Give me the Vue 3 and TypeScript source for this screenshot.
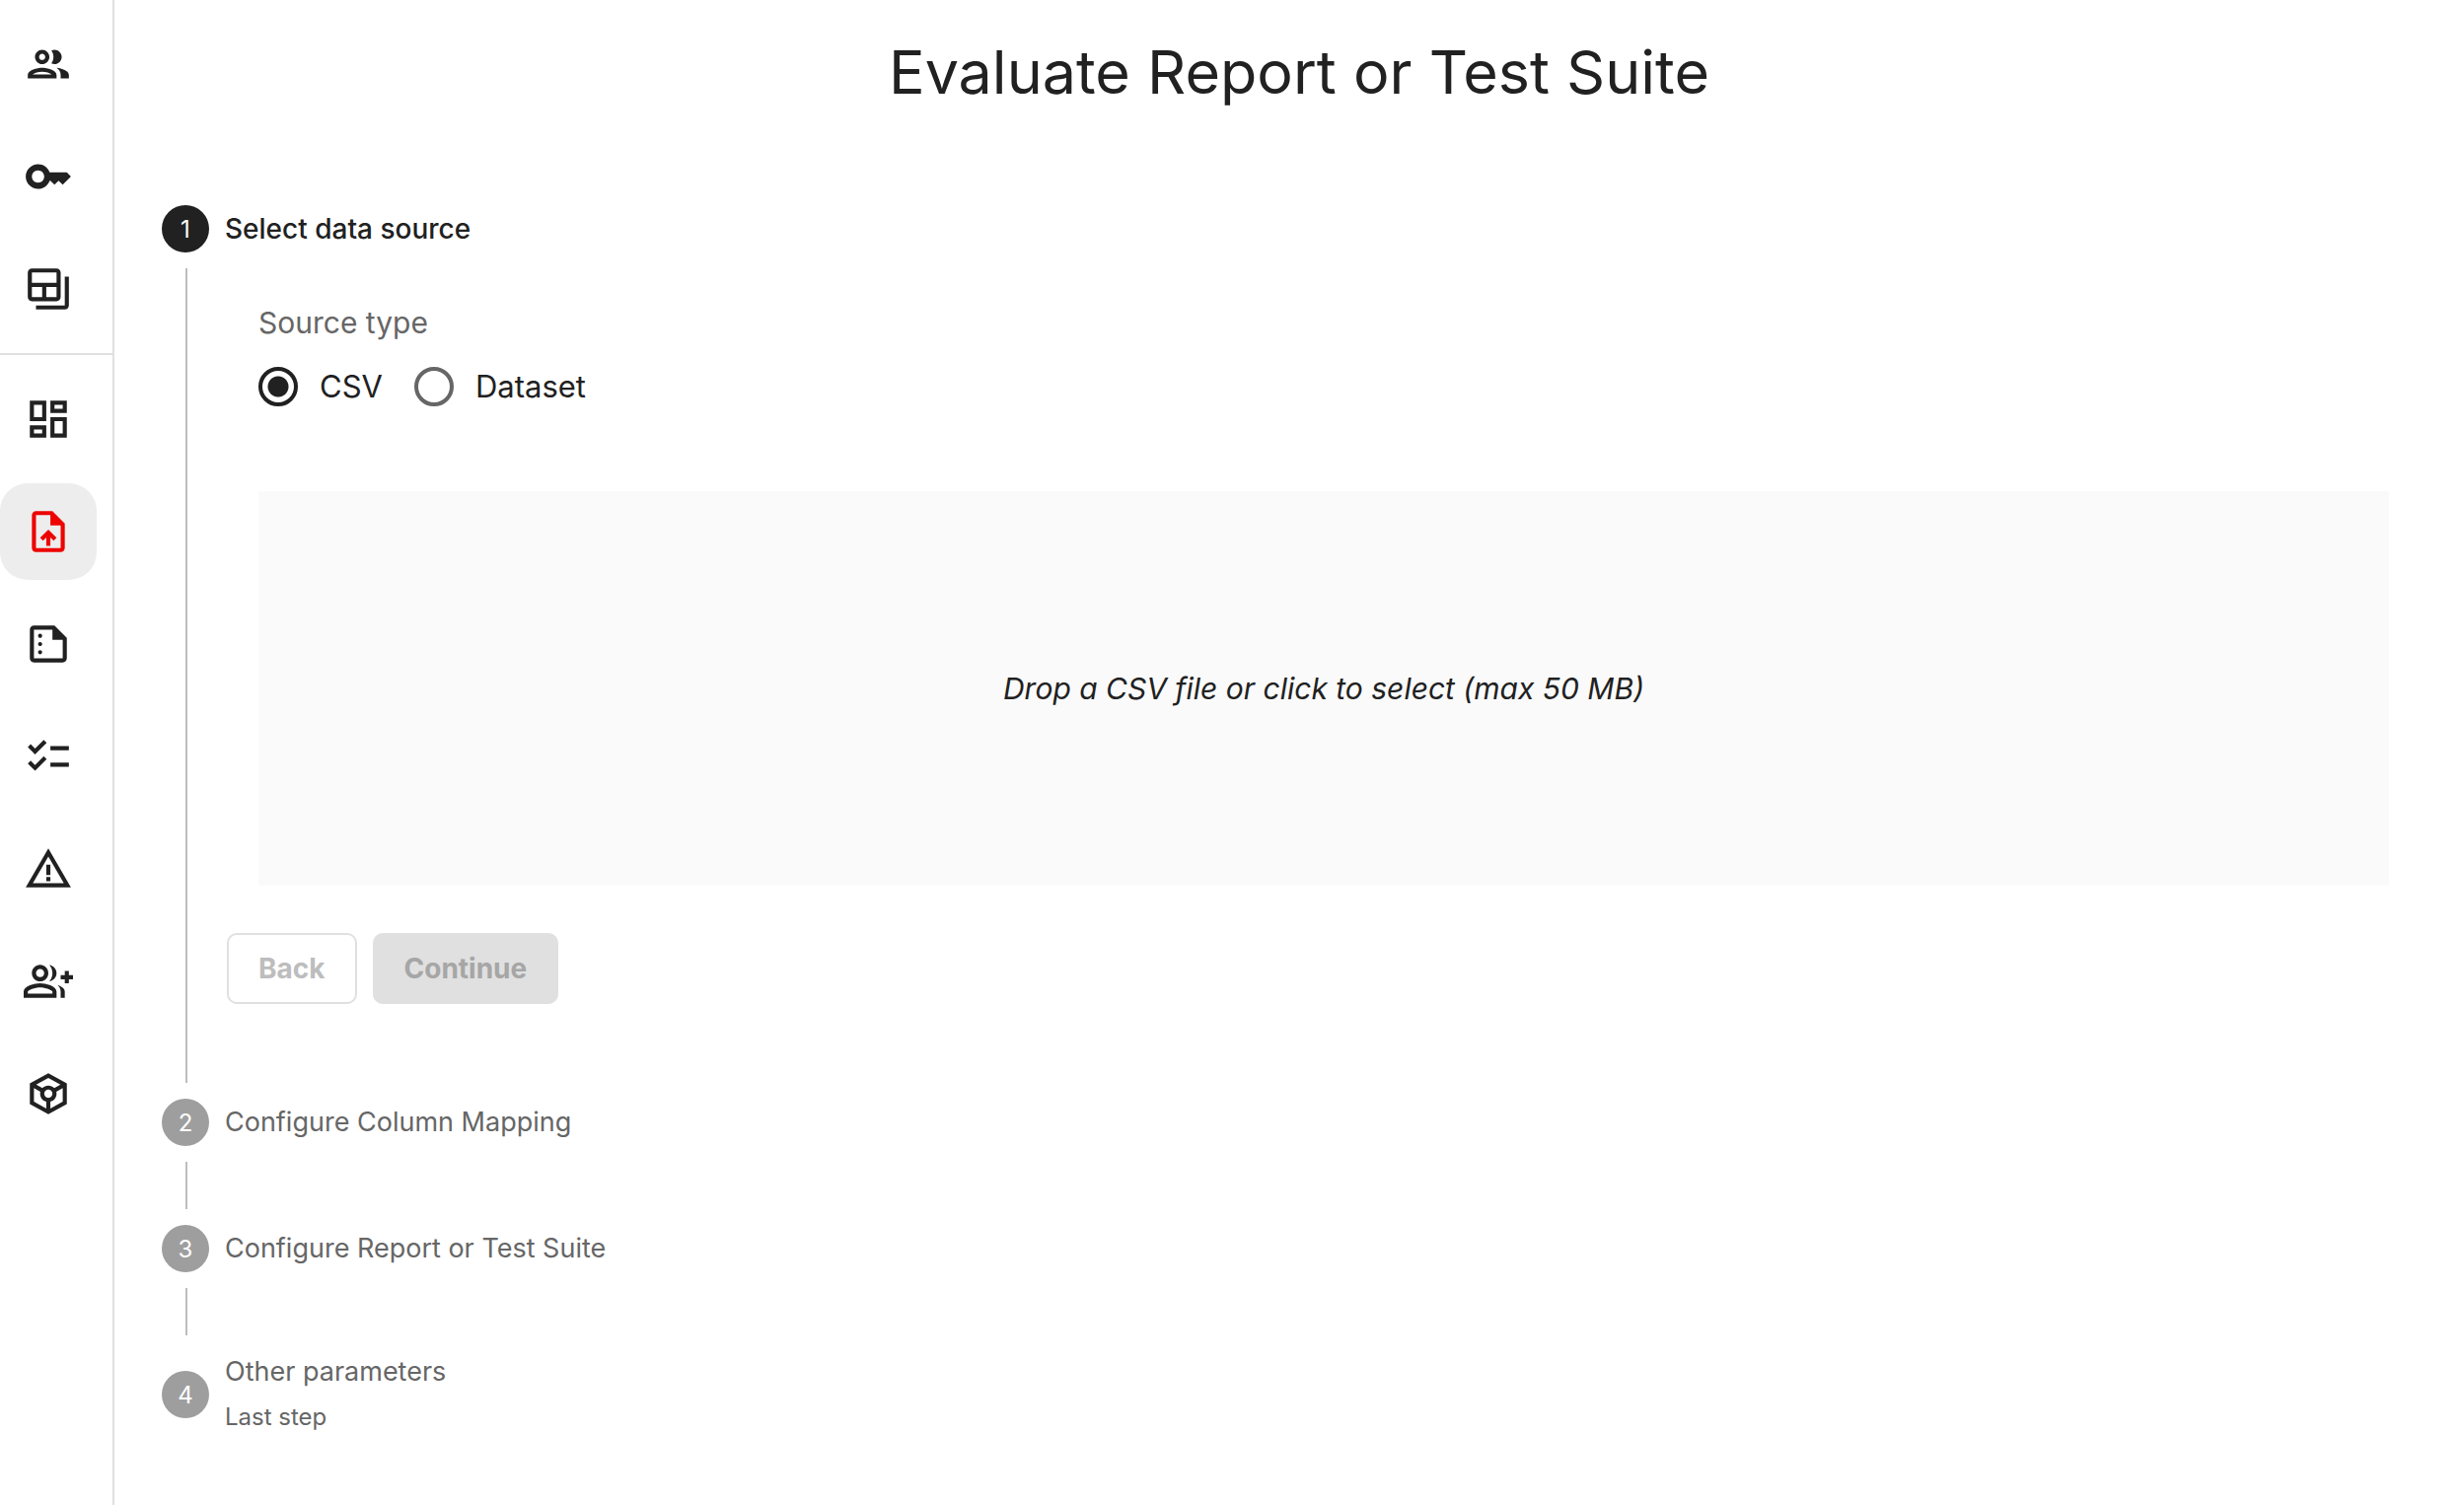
<script setup lang="ts">
import { ref } from 'vue'

interface NavItem {
  label: string
  path: string
  active?: boolean
}

const globalNav: NavItem[] = [
  {
    label: 'Teams',
    path: 'M9 13.75c-2.34 0-7 1.17-7 3.5V19h14v-1.75c0-2.33-4.66-3.5-7-3.5M4.34 17c.84-.58 2.87-1.25 4.66-1.25s3.82.67 4.66 1.25zM9 12c1.93 0 3.5-1.57 3.5-3.5S10.93 5 9 5 5.5 6.57 5.5 8.5 7.07 12 9 12m0-5c.83 0 1.5.67 1.5 1.5S9.83 10 9 10s-1.5-.67-1.5-1.5S8.17 7 9 7m7.04 6.81c1.16.84 1.96 1.96 1.96 3.44V19h4v-1.75c0-2.02-3.5-3.17-5.96-3.44M15 12c1.93 0 3.5-1.57 3.5-3.5S16.93 5 15 5c-.54 0-1.04.13-1.5.35.63.89 1 1.98 1 3.15s-.37 2.26-1 3.15c.46.22.96.35 1.5.35',
  },
  {
    label: 'Tokens',
    path: 'M21 10h-8.35C11.83 7.67 9.61 6 7 6c-3.31 0-6 2.69-6 6s2.69 6 6 6c2.61 0 4.83-1.67 5.65-4H13l2 2 2-2 2 2 4-4.04zM7 15c-1.65 0-3-1.35-3-3s1.35-3 3-3 3 1.35 3 3-1.35 3-3 3',
  },
  {
    label: 'Datasets',
    path: 'M20 6v14H6v2h14c1.1 0 2-.9 2-2V6zM16 2H4c-1.1 0-2 .9-2 2v12c0 1.1.9 2 2 2h12c1.1 0 2-.9 2-2V4c0-1.1-.9-2-2-2M9 16H4v-5h5zm7 0h-5v-5h5zm0-7H4V4h12z',
  },
]

const projectNav: NavItem[] = [
  {
    label: 'Dashboard',
    path: 'M19 5v2h-4V5zM9 5v6H5V5zm10 8v6h-4v-6zM9 17v2H5v-2zM21 3h-8v6h8zM11 3H3v10h8zm10 8h-8v10h8zm-10 4H3v6h8z',
  },
  {
    label: 'Evaluate',
    active: true,
    path: 'M14 2H6c-1.1 0-1.99.9-1.99 2L4 20c0 1.1.89 2 1.99 2H18c1.1 0 2-.9 2-2V8zm4 18H6V4h7v5h5zM8 15.01l1.41 1.41L11 14.84V19h2v-4.16l1.59 1.59L16 15.01 12.01 11z',
  },
  {
    label: 'Reports',
    path: 'M15 3H5c-1.1 0-1.99.9-1.99 2L3 19c0 1.1.89 2 1.99 2H19c1.1 0 2-.9 2-2V9zM5 19V5h9v5h5v9zM9 8c0 .55-.45 1-1 1s-1-.45-1-1 .45-1 1-1 1 .45 1 1m0 4c0 .55-.45 1-1 1s-1-.45-1-1 .45-1 1-1 1 .45 1 1m0 4c0 .55-.45 1-1 1s-1-.45-1-1 .45-1 1-1 1 .45 1 1',
  },
  {
    label: 'Test suites',
    path: 'M22 7h-9v2h9zm0 8h-9v2h9zM5.54 11 2 7.46l1.41-1.41 2.12 2.12 4.24-4.24 1.41 1.41zm0 8L2 15.46l1.41-1.41 2.12 2.12 4.24-4.24 1.41 1.41z',
  },
  {
    label: 'Alerts',
    path: 'M12 5.99 19.53 19H4.47zM12 2 1 21h22zm1 14h-2v2h2zm0-6h-2v5h2z',
  },
  {
    label: 'Members',
    path: 'M22 9V7h-2v2h-2v2h2v2h2v-2h2V9zM8 12c2.21 0 4-1.79 4-4s-1.79-4-4-4-4 1.79-4 4 1.79 4 4 4m0-6c1.1 0 2 .9 2 2s-.9 2-2 2-2-.9-2-2 .9-2 2-2m0 7c-2.67 0-8 1.34-8 4v3h16v-3c0-2.66-5.33-4-8-4m6 5H2v-.99C2.2 16.29 5.3 15 8 15s5.8 1.29 6 2zM12.51 4.05C13.43 5.11 14 6.49 14 8s-.57 2.89-1.49 3.95C14.47 11.7 16 10.04 16 8s-1.53-3.7-3.49-3.95m4.02 9.78C17.42 14.66 18 15.7 18 17v3h2v-3c0-1.45-1.59-2.51-3.47-3.17',
  },
  {
    label: 'Models',
    path: 'M21 7 12 2 3 7v10l9 5 9-5zm-9-2.71 5.91 3.28-3.01 1.67C14.17 8.48 13.14 8 12 8s-2.17.48-2.9 1.24L6.09 7.57zm-1 14.87-6-3.33V9.26L8.13 11c-.09.31-.13.65-.13 1 0 1.86 1.27 3.43 3 3.87zM10 12c0-1.1.9-2 2-2s2 .9 2 2-.9 2-2 2-2-.9-2-2m3 7.16v-3.28c1.73-.44 3-2.01 3-3.87 0-.35-.04-.69-.13-1.01L19 9.26v6.57z',
  },
]

const steps = [
  { title: 'Select data source' },
  { title: 'Configure Column Mapping' },
  { title: 'Configure Report or Test Suite' },
  { title: 'Other parameters', note: 'Last step' },
]

const activeStep = 0
const source = ref<'csv' | 'dataset'>('csv')
</script>

<template>
  <div class="layout">
    <aside class="sidebar">
      <nav class="nav-group">
        <a v-for="item in globalNav" :key="item.label" class="nav-link" href="#" :aria-label="item.label">
          <svg class="icon" viewBox="0 0 24 24" aria-hidden="true"><path :d="item.path" /></svg>
        </a>
      </nav>
      <nav class="nav-group">
        <a
          v-for="item in projectNav"
          :key="item.label"
          class="nav-link"
          :class="{ active: item.active }"
          href="#"
          :aria-label="item.label"
        >
          <svg class="icon" viewBox="0 0 24 24" aria-hidden="true"><path :d="item.path" /></svg>
        </a>
      </nav>
    </aside>

    <main class="main">
      <h1 class="title">Evaluate Report or Test Suite</h1>

      <ol class="stepper">
        <li v-for="(step, i) in steps" :key="step.title" class="step" :class="{ current: i === activeStep }">
          <div class="step-head">
            <span class="badge">{{ i + 1 }}</span>
            <span class="step-text">
              <span class="step-title">{{ step.title }}</span>
              <span v-if="step.note" class="step-note">{{ step.note }}</span>
            </span>
          </div>

          <div v-if="i < steps.length - 1" class="step-body">
            <template v-if="i === activeStep">
              <div class="panel">
                <fieldset class="source">
                  <legend class="legend">Source type</legend>
                  <div class="options">
                    <label class="option">
                      <input v-model="source" type="radio" name="source" value="csv" />
                      <span>CSV</span>
                    </label>
                    <label class="option">
                      <input v-model="source" type="radio" name="source" value="dataset" />
                      <span>Dataset</span>
                    </label>
                  </div>
                </fieldset>
                <button type="button" class="dropzone">Drop a CSV file or click to select (max 50 MB)</button>
              </div>
              <div class="actions">
                <button type="button" class="btn outlined" disabled>Back</button>
                <button type="button" class="btn contained" disabled>Continue</button>
              </div>
            </template>
          </div>
        </li>
      </ol>
    </main>
  </div>
</template>

<style>
body {
  margin: 0;
  background: #fff;
}
</style>

<style scoped>
.layout {
  display: flex;
  min-height: 100vh;
  color: #212121;
  font-family: Inter, 'Liberation Sans', sans-serif;
}

.sidebar {
  flex: none;
  border-right: 2px solid #e0e0e0;
}

.nav-group {
  display: flex;
  flex-direction: column;
  gap: 16px;
  padding: 16px 16px 16px 0;
}

.nav-group + .nav-group {
  border-top: 2px solid #e0e0e0;
}

.nav-link {
  display: flex;
  align-items: center;
  justify-content: center;
  width: 98px;
  height: 98px;
  border-radius: 28px;
  color: #212121;
}

.nav-link.active {
  background: #ededed;
  color: #ed0400;
}

.icon {
  width: 50px;
  height: 50px;
  fill: currentColor;
}

.main {
  flex: 1;
  min-width: 0;
  padding: 32px 28px 48px 48px;
}

.title {
  margin: 0 0 94px;
  font-size: 61px;
  font-weight: 400;
  line-height: 82px;
  text-align: center;
}

.stepper {
  margin: 0;
  padding: 0;
  list-style: none;
}

.step-head {
  display: flex;
  align-items: center;
  gap: 16px;
}

.badge {
  display: flex;
  align-items: center;
  justify-content: center;
  width: 48px;
  height: 48px;
  border-radius: 50%;
  background: #9e9e9e;
  color: #fff;
  font-size: 24px;
}

.current .badge {
  background: #212121;
}

.step-text {
  display: flex;
  flex-direction: column;
  gap: 4px;
  color: #666;
}

.step-title {
  font-size: 27px;
  line-height: 42px;
}

.current .step-title {
  color: #212121;
  font-size: 28px;
  font-weight: 500;
}

.step-note {
  font-size: 24px;
  line-height: 42px;
}

.step-body {
  min-height: 48px;
  margin: 16px 0 16px 24px;
  border-left: 2px solid #bdbdbd;
}

.panel {
  padding: 32px 48px 48px 72px;
}

.source {
  min-width: 0;
  margin: 0 0 84px;
  padding: 0;
  border: 0;
}

.legend {
  padding: 0;
  color: #666;
  font-size: 30px;
  line-height: 46px;
}

.options {
  display: flex;
  gap: 32px;
  padding-top: 20px;
}

.option {
  display: flex;
  align-items: center;
  gap: 22px;
  font-size: 31px;
  line-height: 44px;
}

.option input {
  appearance: none;
  width: 40px;
  height: 40px;
  margin: 0;
  border: 4px solid #666;
  border-radius: 50%;
}

.option input:checked {
  border-color: #212121;
  background: radial-gradient(circle, #212121 10px, transparent 11px);
}

.dropzone {
  display: block;
  width: 100%;
  height: 400px;
  border: 0;
  background: #fafafa;
  color: #212121;
  font: italic 30px Inter, 'Liberation Sans', sans-serif;
}

.actions {
  display: flex;
  gap: 16px;
  padding: 0 40px 80px;
}

.btn {
  height: 72px;
  padding: 0 32px;
  border: 0;
  border-radius: 10px;
  font: 700 28px Inter, 'Liberation Sans', sans-serif;
}

.outlined {
  padding: 0 30px;
  border: 2px solid #e0e0e0;
  background: #fff;
  color: #bdbdbd;
}

.contained {
  background: #e0e0e0;
  color: #a6a6a6;
}
</style>
